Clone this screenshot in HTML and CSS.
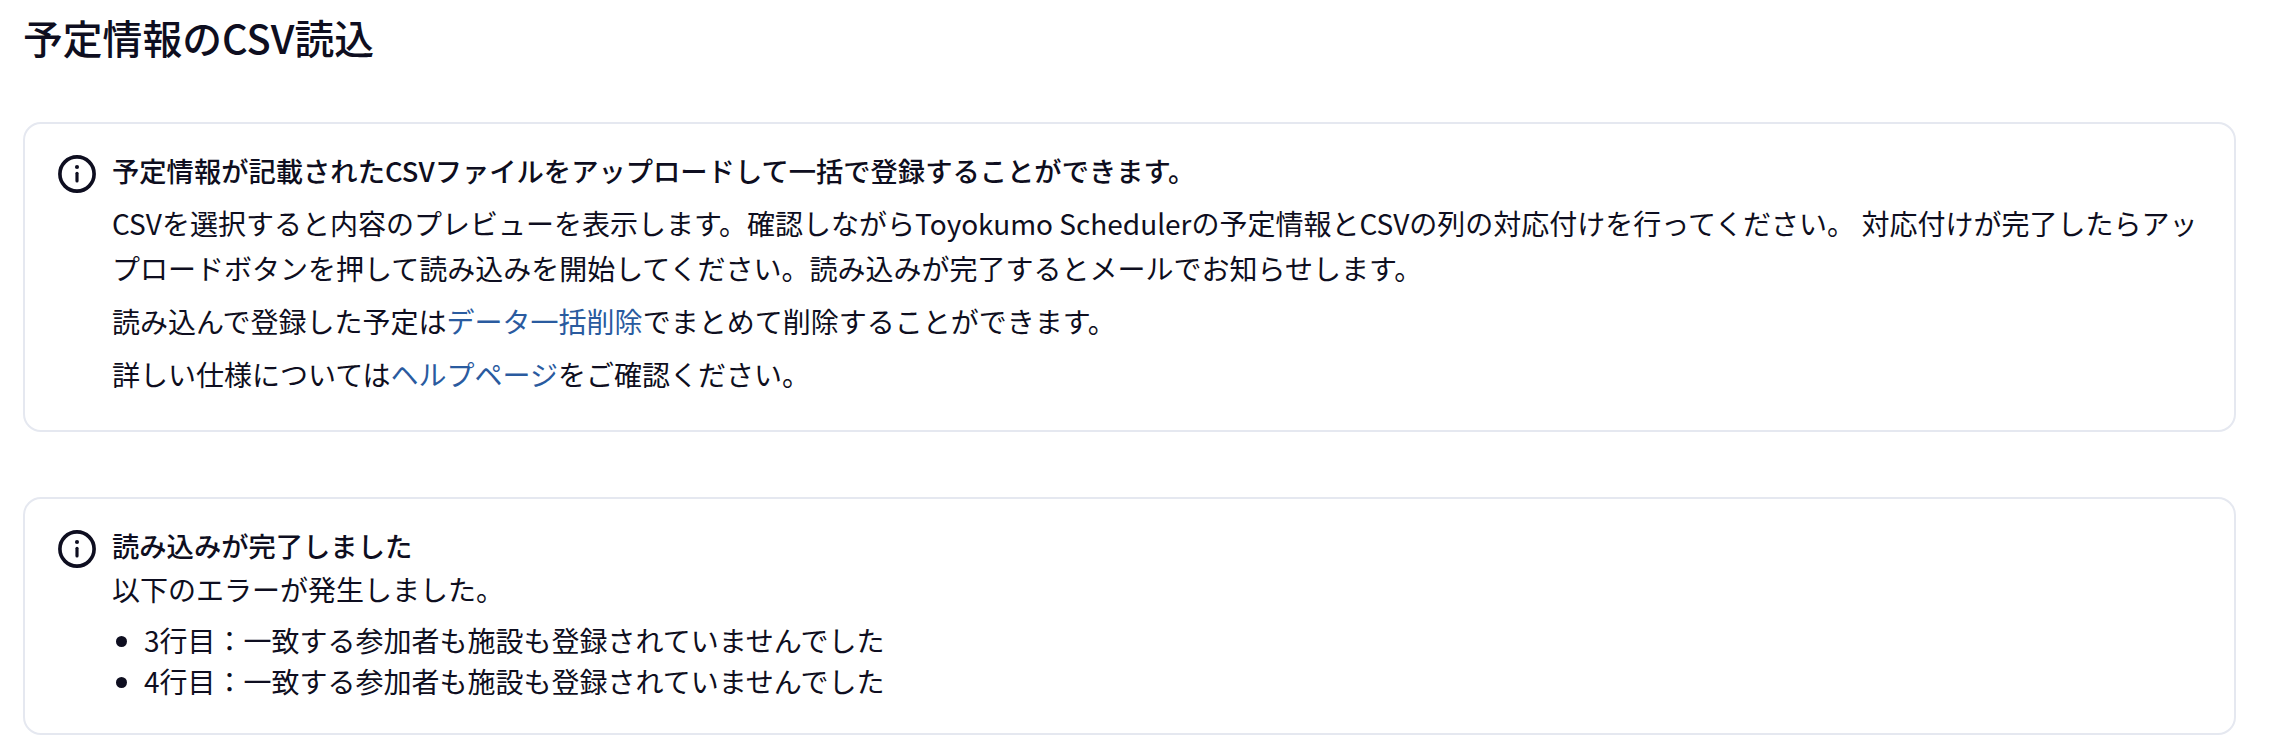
FILE: index.html
```html
<!DOCTYPE html>
<html lang="ja">
<head>
  <meta charset="UTF-8" />
  <title>予定情報のCSV読込</title>
  <link rel="stylesheet" href="styles.css">
</head>
<body>
  <h1 class="page-title">予定情報のCSV読込</h1>

  <!-- 説明 -->
  <section class="notice notice-intro">
    <svg class="notice-icon" viewBox="0 0 24 24" aria-hidden="true">
      <circle cx="12" cy="12" r="10.8" fill="none" stroke="#0e0e20" stroke-width="2.3"/>
      <rect x="11" y="10.6" width="2" height="6.8" rx="1" fill="#0e0e20"/>
      <circle cx="12" cy="7.6" r="1.3" fill="#0e0e20"/>
    </svg>
    <div class="notice-body">
      <div class="notice-title">予定情報が記載されたCSVファイルをアップロードして一括で登録することができます。</div>
      <p class="notice-text">CSVを選択すると内容のプレビューを表示します。確認しながらToyokumo Schedulerの予定情報とCSVの列の対応付けを行ってください。 対応付けが完了したらアップロードボタンを押して読み込みを開始してください。読み込みが完了するとメールでお知らせします。</p>
      <p class="notice-text">読み込んで登録した予定は<a href="#">データ一括削除</a>でまとめて削除することができます。</p>
      <p class="notice-text">詳しい仕様については<a href="#">ヘルプページ</a>をご確認ください。</p>
    </div>
  </section>

  <!-- 読込結果 -->
  <section class="notice notice-result">
    <svg class="notice-icon" viewBox="0 0 24 24" aria-hidden="true">
      <circle cx="12" cy="12" r="10.8" fill="none" stroke="#0e0e20" stroke-width="2.3"/>
      <rect x="11" y="10.6" width="2" height="6.8" rx="1" fill="#0e0e20"/>
      <circle cx="12" cy="7.6" r="1.3" fill="#0e0e20"/>
    </svg>
    <div class="notice-body">
      <div class="notice-title">読み込みが完了しました</div>
      <p class="notice-text">以下のエラーが発生しました。</p>
      <ul class="error-list">
        <li>3行目：一致する参加者も施設も登録されていませんでした</li>
        <li>4行目：一致する参加者も施設も登録されていませんでした</li>
      </ul>
    </div>
  </section>
</body>
</html>
```

FILE: styles.css
```css
body {
  margin: 0;
  padding: 9px 40px 0 23px;
  background-color: #fff;
  color: #0e0e20;
  font-family: "Noto Sans CJK JP", "Noto Sans", sans-serif;
  font-size: 28px;
}

.page-title {
  margin: 0 0 57px;
  font-size: 39.8px;
  font-weight: 500;
  line-height: 56px;
}

.notice {
  display: flex;
  gap: 16px;
  padding: 25px 34px 33px 33px;
  border: 2px solid #e5e8f0;
  border-radius: 18px;
}

.notice-result {
  margin-top: 65px;
  padding-bottom: 32px;
}

.notice-icon {
  flex: none;
  width: 38px;
  height: 38px;
  margin-top: 6px;
}

.notice-body {
  flex: 1;
  min-width: 0;
}

.notice-title {
  font-weight: 500;
  font-size: 27.3px;
  line-height: 43.5px;
}

.notice-text {
  margin: 8.4px 0 0;
  line-height: 44.8px;
}

.notice-result .notice-text {
  margin-top: 0;
}

.notice-text a {
  color: #2a5b9f;
  text-decoration: none;
}

.error-list {
  margin: 8px 0 0;
  padding-left: 32px;
  line-height: 40.5px;
}
```
